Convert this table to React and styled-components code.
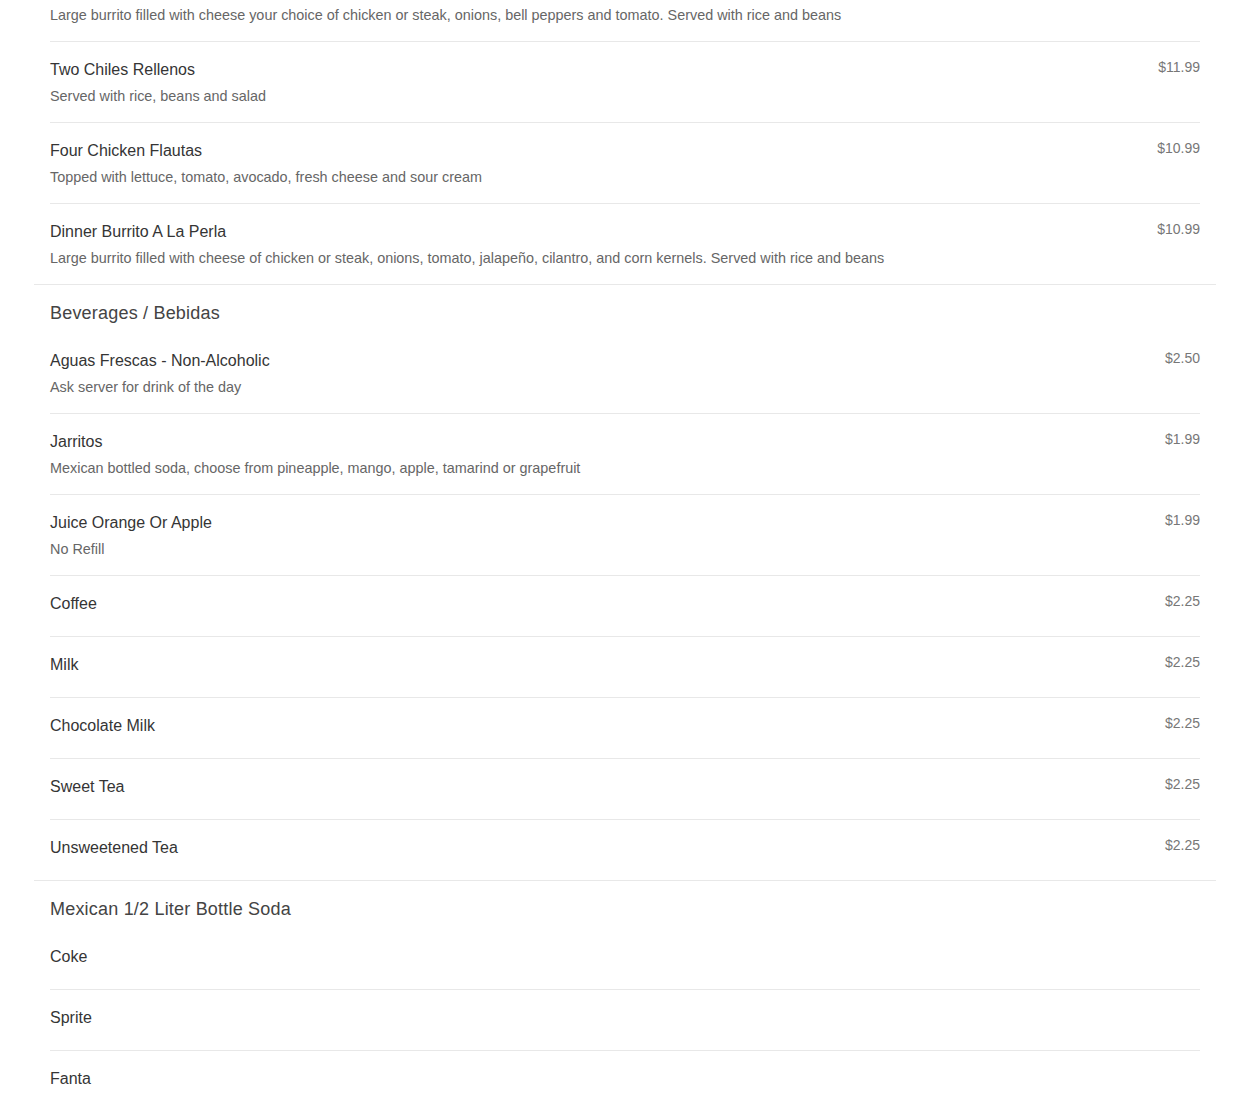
import React from 'react'
import styled, { createGlobalStyle } from 'styled-components'

const GlobalStyle = createGlobalStyle`
body {
  margin: 0;
  background: #fff;
  font-family: "Liberation Sans", Arial, sans-serif;
}
`

const Page = styled.div`
margin: -39px 34px 0;
`
const Section = styled.section`
padding: 0 16px;
border-bottom: 1px solid #e8e8e8;
&:last-child {
  border-bottom: none;
}
`
const Heading = styled.h2`
margin: 0;
padding: 16.6px 0 9.4px;
font-size: 18px;
line-height: 22px;
font-weight: normal;
color: #444;
letter-spacing: 0.2px;
`
const Item = styled.div`
display: flex;
justify-content: space-between;
align-items: flex-start;
padding: 18px 0 16px;
border-bottom: 1px solid #e8e8e8;
&:last-child {
  border-bottom: none;
}
`
const Info = styled.div`
display: flex;
flex-direction: column;
`
const Name = styled.div`
font-size: 16px;
line-height: 20px;
color: #353535;
margin-bottom: 6px;
`
const Desc = styled.div`
font-size: 14.4px;
line-height: 20px;
color: #666;
`
const Price = styled.div`
margin-top: -1px;
font-size: 14px;
line-height: 17px;
color: #777;
`

const sections = [
  {
    items: [
      { name: 'Burrito Supremo', price: '$10.99', desc: 'Large burrito filled with cheese your choice of chicken or steak, onions, bell peppers and tomato. Served with rice and beans' },
      { name: 'Two Chiles Rellenos', price: '$11.99', desc: 'Served with rice, beans and salad' },
      { name: 'Four Chicken Flautas', price: '$10.99', desc: 'Topped with lettuce, tomato, avocado, fresh cheese and sour cream' },
      { name: 'Dinner Burrito A La Perla', price: '$10.99', desc: 'Large burrito filled with cheese of chicken or steak, onions, tomato, jalapeño, cilantro, and corn kernels. Served with rice and beans' },
    ],
  },
  {
    title: 'Beverages / Bebidas',
    items: [
      { name: 'Aguas Frescas - Non-Alcoholic', price: '$2.50', desc: 'Ask server for drink of the day' },
      { name: 'Jarritos', price: '$1.99', desc: 'Mexican bottled soda, choose from pineapple, mango, apple, tamarind or grapefruit' },
      { name: 'Juice Orange Or Apple', price: '$1.99', desc: 'No Refill' },
      { name: 'Coffee', price: '$2.25' },
      { name: 'Milk', price: '$2.25' },
      { name: 'Chocolate Milk', price: '$2.25' },
      { name: 'Sweet Tea', price: '$2.25' },
      { name: 'Unsweetened Tea', price: '$2.25' },
    ],
  },
  {
    title: 'Mexican 1/2 Liter Bottle Soda',
    items: [
      { name: 'Coke' },
      { name: 'Sprite' },
      { name: 'Fanta' },
    ],
  },
]

export default function App() {
  return (
    <Page>
      <GlobalStyle />
      {sections.map((section, i) => (
        <Section key={i}>
          {section.title && <Heading>{section.title}</Heading>}
          {section.items.map((item, j) => (
            <Item key={j}>
              <Info>
                <Name>{item.name}</Name>
                {item.desc && <Desc>{item.desc}</Desc>}
              </Info>
              {item.price && <Price>{item.price}</Price>}
            </Item>
          ))}
        </Section>
      ))}
    </Page>
  )
}
